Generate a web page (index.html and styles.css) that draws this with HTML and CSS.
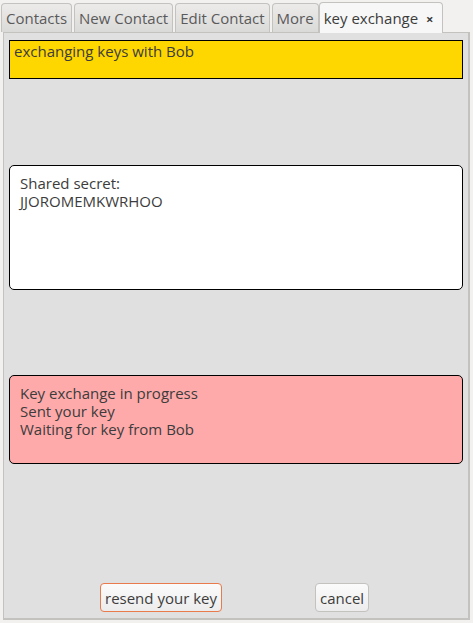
FILE: index.html
```html
<!DOCTYPE html>
<html lang="en">
<head>
    <meta charset="UTF-8">
    <title>key exchange</title>
    <link rel="stylesheet" href="styles.css">
</head>
<body>
    <div class="tabs">
        <div class="tab">Contacts</div>
        <div class="tab">New Contact</div>
        <div class="tab">Edit Contact</div>
        <div class="tab">More</div>
        <div class="tab active">key exchange <span class="close">&#215;</span></div>
    </div>
    <div class="panel">
        <div class="status">exchanging keys with Bob</div>
        <div class="secret">
            Shared secret:<br>
            JJOROMEMKWRHOO
        </div>
        <div class="progress">
            Key exchange in progress<br>
            Sent your key<br>
            Waiting for key from Bob
        </div>
        <div class="buttons">
            <button class="focus">resend your key</button>
            <button>cancel</button>
        </div>
    </div>
</body>
</html>
```

FILE: styles.css
```css
body {
    margin: 0;
    width: 473px;
    height: 623px;
    background-color: #f2f1f0;
    font-family: "Open Sans", sans-serif;
    font-size: 15px;
    color: #3c3c3c;
}
.tabs {
    display: flex;
    align-items: flex-end;
    height: 32px;
    padding-left: 1px;
}
.tab {
    height: 29px;
    line-height: 28px;
    padding: 0 4px;
    margin-right: 2px;
    border: 1px solid #c4c2bf;
    border-bottom: none;
    border-radius: 4px 4px 0 0;
    background: linear-gradient(#ecebea, #dadad9);
    color: #5a5a5a;
    box-sizing: border-box;
}
.tab:nth-child(4) {
    margin-right: 0;
}
.tab.active {
    height: 31px;
    line-height: 30px;
    margin-right: 0;
    margin-bottom: -1px;
    padding: 0 8px 0 4px;
    background: #f7f7f7;
    color: #3c3c3c;
    position: relative;
}
.close {
    font-size: 13px;
    font-weight: bold;
    margin-left: 4px;
}
.panel {
    margin: 0 3px 0 3px;
    height: 588px;
    background-color: #e0e0e0;
    border: 1px solid #c4c2bf;
    border-right-width: 2px;
    border-bottom-width: 2px;
    box-sizing: border-box;
    padding: 7px 5px 0 5px;
}
.status {
    height: 39px;
    background-color: #ffd700;
    border: 1px solid #000;
    box-sizing: border-box;
    padding: 1px 4px;
    line-height: 18px;
}
.secret {
    margin-top: 86px;
    height: 125px;
    background-color: #fff;
    border: 1px solid #000;
    border-radius: 5px;
    box-sizing: border-box;
    padding: 8px 10px;
    line-height: 18px;
}
.progress {
    margin-top: 85px;
    height: 89px;
    background-color: #ffaaaa;
    border: 1px solid #000;
    border-radius: 5px;
    box-sizing: border-box;
    padding: 8px 10px;
    line-height: 18px;
}
.buttons {
    display: flex;
    align-items: center;
    margin-top: 119px;
    padding-left: 91px;
    gap: 93px;
}
button {
    height: 29px;
    padding: 0 4px;
    font-family: "Open Sans", sans-serif;
    font-size: 15px;
    color: #3c3c3c;
    background: linear-gradient(#fbfbfb, #ececec);
    border: 1px solid #c4c2bf;
    border-radius: 4px;
}
button.focus {
    border-color: #e97a4b;
}
```
